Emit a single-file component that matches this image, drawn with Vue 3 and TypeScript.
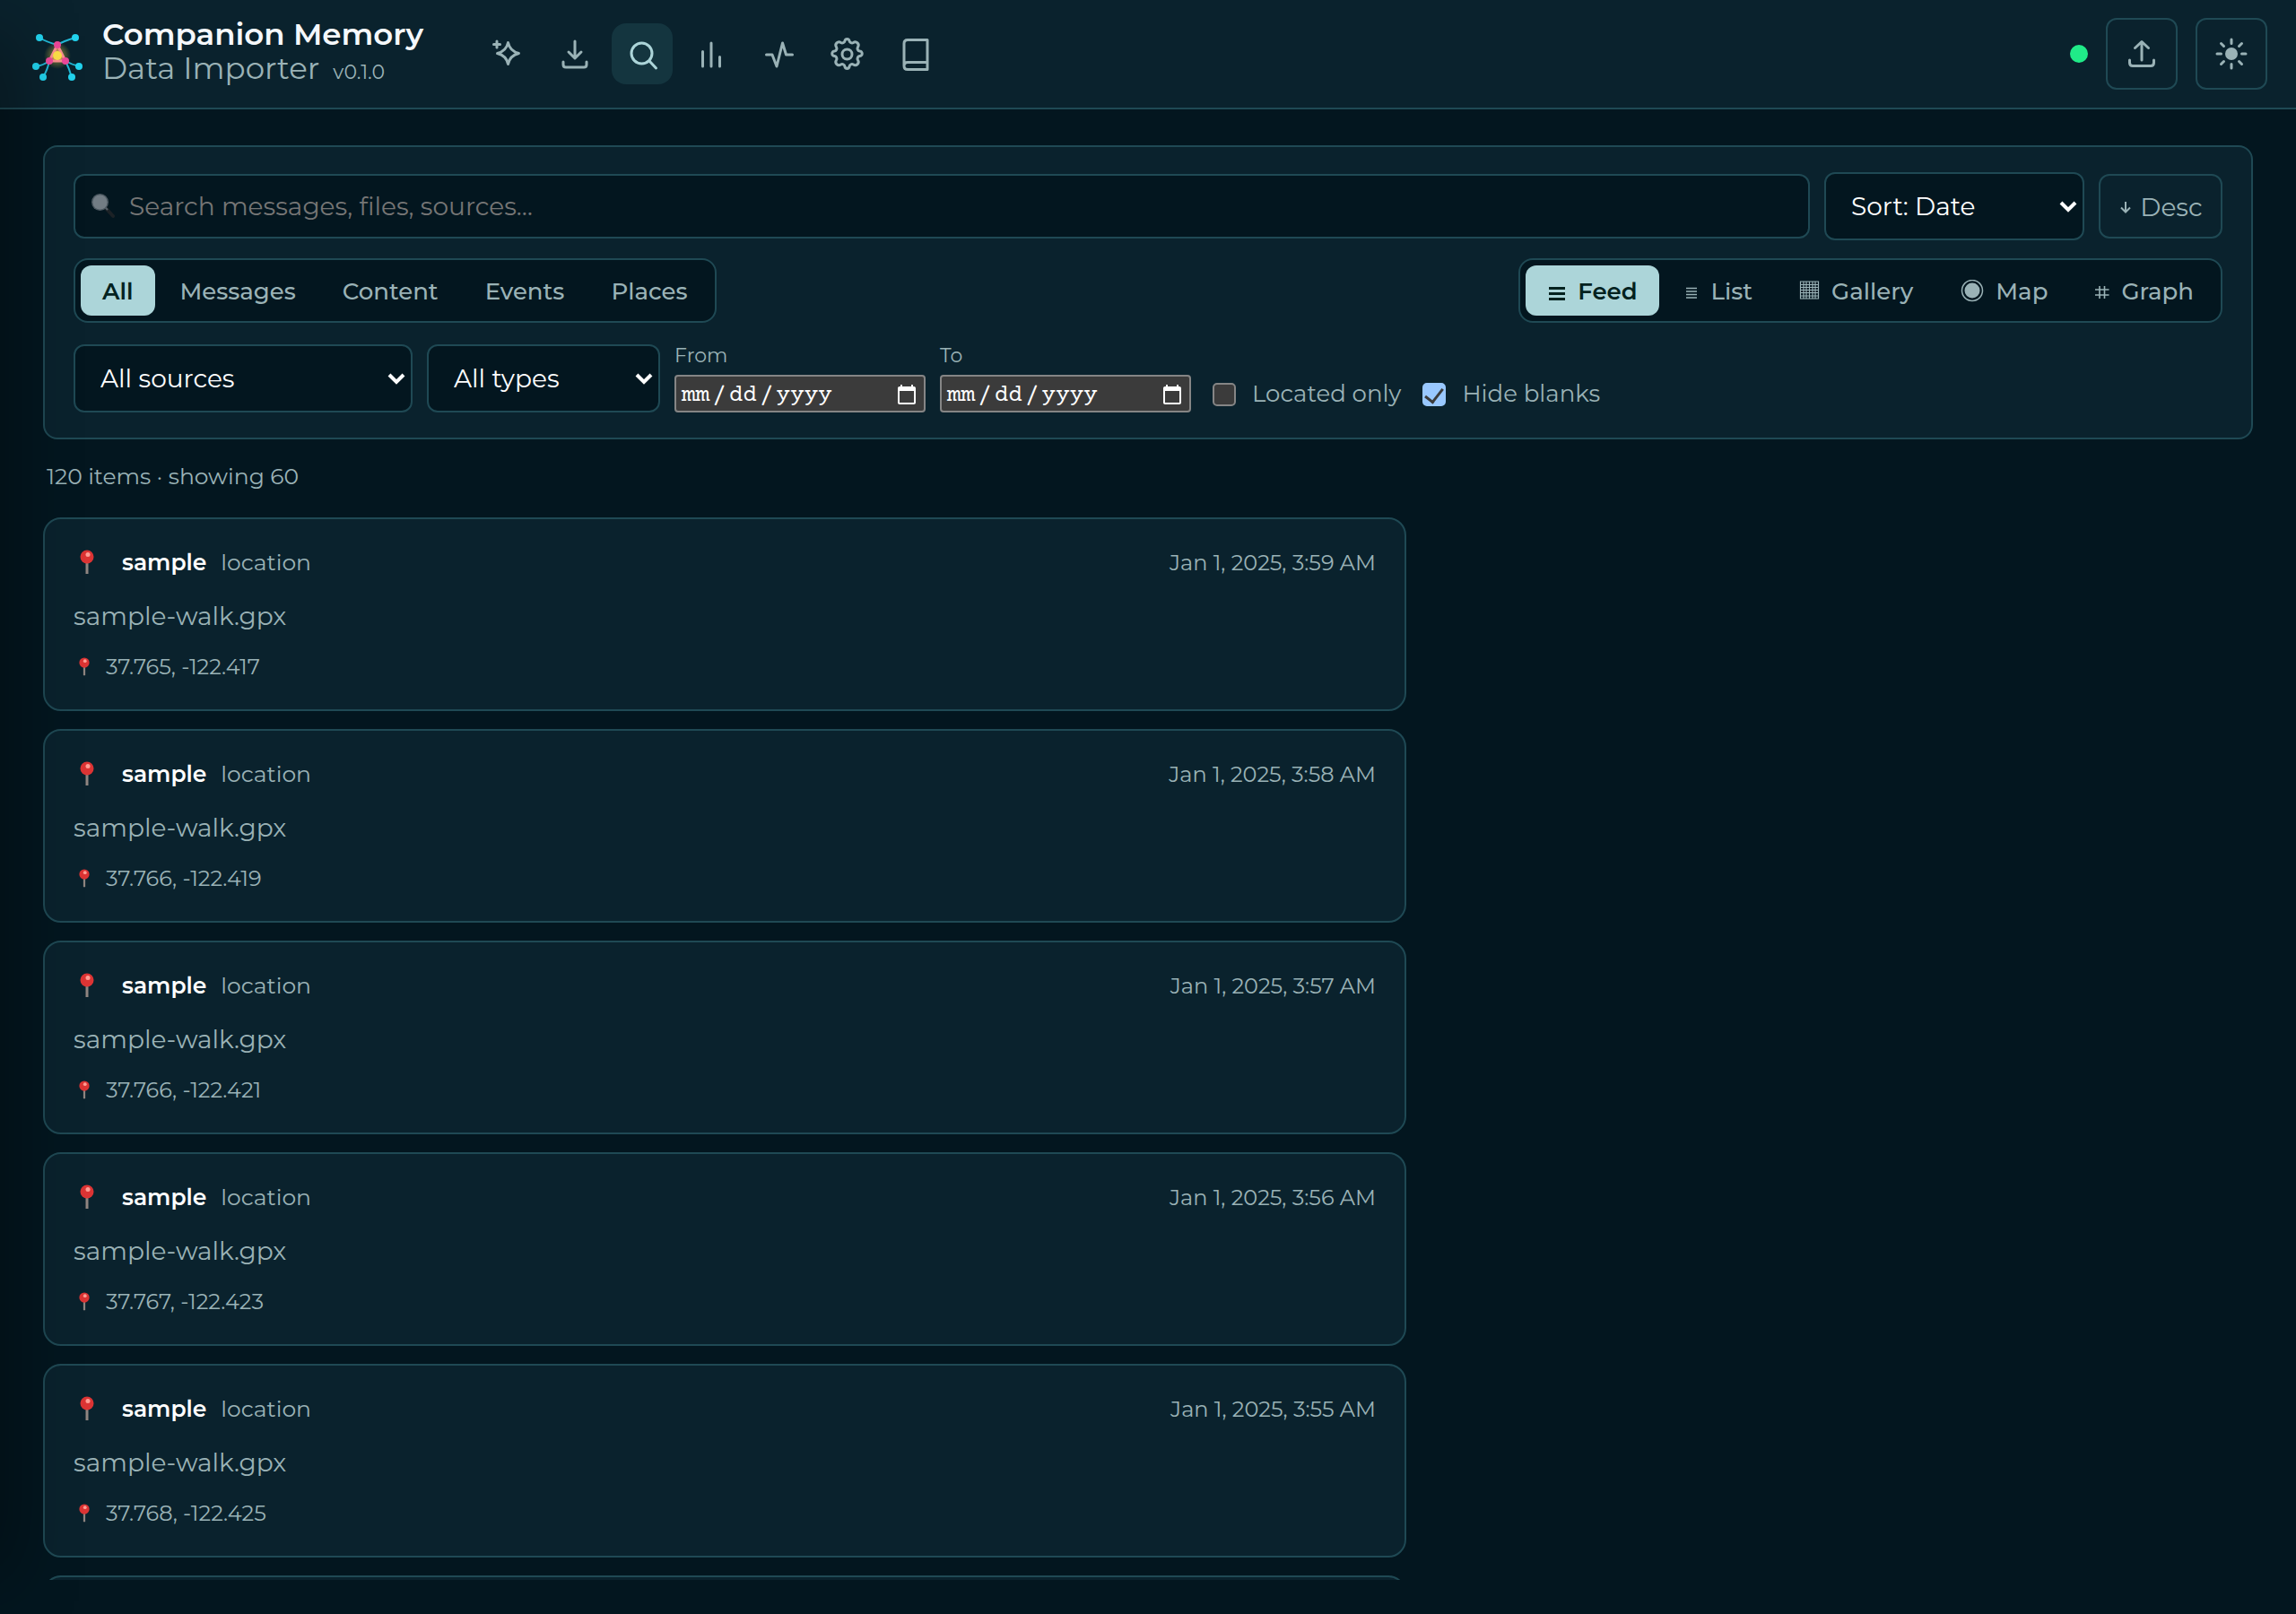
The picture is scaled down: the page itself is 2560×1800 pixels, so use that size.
<script setup lang="ts">
import { ref } from 'vue'

interface Item {
  time: string
  coords: string
}

interface View {
  name: string
  icon: string
}

const navItems = ['Assistant', 'Import', 'Explore', 'Stats', 'Activity', 'Settings', 'Docs']
const activeNav = ref('Explore')

const kinds = ['All', 'Messages', 'Content', 'Events', 'Places']
const activeKind = ref('All')

const views: View[] = [
  { name: 'Feed', icon: 'feed' },
  { name: 'List', icon: 'list' },
  { name: 'Gallery', icon: 'gallery' },
  { name: 'Map', icon: 'map' },
  { name: 'Graph', icon: 'graph' },
]
const activeView = ref('Feed')

const query = ref('')
const locatedOnly = ref(false)
const hideBlanks = ref(true)

const items: Item[] = [
  { time: 'Jan 1, 2025, 3:59 AM', coords: '37.765, -122.417' },
  { time: 'Jan 1, 2025, 3:58 AM', coords: '37.766, -122.419' },
  { time: 'Jan 1, 2025, 3:57 AM', coords: '37.766, -122.421' },
  { time: 'Jan 1, 2025, 3:56 AM', coords: '37.767, -122.423' },
  { time: 'Jan 1, 2025, 3:55 AM', coords: '37.768, -122.425' },
]
</script>

<template>
  <div class="app">
    <header class="topbar">
      <div class="brand">
        <svg class="logo" viewBox="0 0 64 64" aria-hidden="true">
          <defs>
            <radialGradient id="glow">
              <stop offset="0" stop-color="#fde047" stop-opacity="0.6" />
              <stop offset="1" stop-color="#fde047" stop-opacity="0" />
            </radialGradient>
          </defs>
          <g fill="none" stroke="#22b8d6" stroke-width="2">
            <path d="M12 14Q20 19 32 22Q38 18 52 14" />
            <path d="M8 46Q16 45 23 40Q21 50 16 58" />
            <path d="M56 46Q48 44 41 40Q45 48 48 58" />
          </g>
          <circle cx="32" cy="34" r="15" fill="url(#glow)" />
          <path d="M32 22L23 40H41Z" fill="#f9a06a" fill-opacity="0.6" stroke="#fb8f8f" stroke-width="3" />
          <g fill="#22d3ee">
            <circle cx="12" cy="14" r="4" /><circle cx="52" cy="14" r="4" />
            <circle cx="8" cy="46" r="4" /><circle cx="56" cy="46" r="4" />
            <circle cx="16" cy="58" r="4" /><circle cx="48" cy="58" r="4" />
          </g>
          <g fill="#ec4899">
            <circle cx="32" cy="22" r="4" /><circle cx="23" cy="40" r="4" /><circle cx="41" cy="40" r="4" />
          </g>
          <circle cx="32" cy="34" r="5" fill="#fde047" />
        </svg>
        <div class="brand-text">
          <div class="brand-title">Companion Memory</div>
          <div class="brand-sub">Data Importer <span class="version">v0.1.0</span></div>
        </div>
      </div>

      <nav class="nav" aria-label="Main">
        <button
          v-for="item in navItems"
          :key="item"
          type="button"
          class="nav-btn"
          :class="{ active: item === activeNav }"
          :aria-label="item"
          @click="activeNav = item"
        >
          <svg viewBox="0 0 40 40" aria-hidden="true">
            <g v-if="item === 'Assistant'">
              <path d="M22.500 7.500Q24.500 17 34.500 19.500Q24.500 22 22.500 31.500Q20.500 22 10.500 19.500Q20.500 17 22.500 7.500Z" />
              <path d="M10 6V13M6.500 9.500H13.500" />
            </g>
            <g v-else-if="item === 'Import'">
              <path d="M21 6V24M14 18L21 25L28 18M8 29V32Q8 35 11 35H31Q34 35 34 32V29" />
            </g>
            <g v-else-if="item === 'Explore'">
              <circle cx="19.500" cy="19.500" r="11.500" /><path d="M28 28L35.500 36" />
            </g>
            <g v-else-if="item === 'Stats'">
              <path d="M11.500 17.500V34M21 8V34M30.500 23.500V34" />
            </g>
            <g v-else-if="item === 'Activity'">
              <path d="M6.500 21H13L18 34L24.500 8L28.500 21H35.500" />
            </g>
            <g v-else-if="item === 'Settings'">
              <path d="M18 5.500a2.600 2.600 0 0 1 5 0a3 3 0 0 0 4.500 2a3.600 3.600 0 0 1 5 5a3 3 0 0 0 2 4.500a2.600 2.600 0 0 1 0 5.500a3 3 0 0 0 -2 4.500a3.600 3.600 0 0 1 -5 5a3 3 0 0 0 -4.500 2.500a2.600 2.600 0 0 1 -5 0a3 3 0 0 0 -4.500 -2.500a3.600 3.600 0 0 1 -5 -5a3 3 0 0 0 -2 -4.500a2.600 2.600 0 0 1 0 -5.500a3 3 0 0 0 2 -4.500a3.600 3.600 0 0 1 5 -5a3 3 0 0 0 4.500 -2Z" />
              <circle cx="20.500" cy="20.500" r="5.500" />
            </g>
            <g v-else>
              <path d="M8 33V8.500Q8 4.500 12 4.500H34V37.500H12Q8 37.500 8 33.500Q8 29.500 12 29.500H33.500" />
            </g>
          </svg>
        </button>
      </nav>

      <div class="actions">
        <span class="status" role="img" aria-label="Online"></span>
        <button type="button" class="icon-btn" aria-label="Upload">
          <svg viewBox="0 0 40 40" aria-hidden="true">
            <path d="M20 27V7M12.500 13.500L20 6.500L27.500 13.500M6.500 27V30Q6.500 33.500 10 33.500H30Q33.500 33.500 33.500 30V27" />
          </svg>
        </button>
        <button type="button" class="icon-btn" aria-label="Toggle theme">
          <svg viewBox="0 0 40 40" aria-hidden="true">
            <circle cx="20" cy="20" r="7" fill="currentColor" stroke="none" />
            <path d="M20 4V8.500M20 31.500V36M4 20H8.500M31.500 20H36M8.500 8.500L11.500 11.500M28.500 28.500L31.500 31.500M8.500 31.500L11.500 28.500M28.500 11.500L31.500 8.500" />
          </svg>
        </button>
      </div>
    </header>

    <main class="content">
      <section class="filters" aria-label="Filters">
        <div class="row">
          <label class="search">
            <svg class="lens" viewBox="0 0 26 28" aria-hidden="true">
              <path d="M15 15L24 25" stroke="#1c2226" stroke-width="4" stroke-linecap="round" />
              <path d="M14 14L18 18" stroke="#56616a" stroke-width="2" />
              <circle cx="9.500" cy="9.500" r="9.500" fill="#4e5a63" />
              <circle cx="9.500" cy="9.500" r="8" fill="#727c84" />
            </svg>
            <input v-model="query" type="text" placeholder="Search messages, files, sources…" aria-label="Search" />
          </label>
          <div class="select sort">
            <select aria-label="Sort"><option>Sort: Date</option></select>
            <svg viewBox="0 0 20 14" aria-hidden="true"><path d="M2 3L10 11L18 3" /></svg>
          </div>
          <button type="button" class="order">
            <svg viewBox="0 0 12 14" aria-hidden="true"><path d="M6 1V12M1 7.500L6 12.500L11 7.500" /></svg>
            Desc
          </button>
        </div>

        <div class="row tabs-row">
          <div class="segmented">
            <button
              v-for="kind in kinds"
              :key="kind"
              type="button"
              :class="{ active: kind === activeKind }"
              @click="activeKind = kind"
            >{{ kind }}</button>
          </div>
          <div class="segmented">
            <button
              v-for="view in views"
              :key="view.name"
              type="button"
              :class="{ active: view.name === activeView }"
              @click="activeView = view.name"
            >
              <svg v-if="view.icon === 'feed'" viewBox="0 0 22 26" width="22" height="26" aria-hidden="true">
                <path d="M2 9.500H20M2 15.500H20M2 21.500H20" stroke-width="3" />
              </svg>
              <svg v-else-if="view.icon === 'list'" viewBox="0 0 18 26" width="18" height="26" aria-hidden="true">
                <path d="M2 9.500H14M2 13H14M2 16.500H14M2 20H14" stroke-width="1.500" />
              </svg>
              <svg v-else-if="view.icon === 'gallery'" viewBox="0 0 24 26" width="24" height="26" aria-hidden="true">
                <path d="M1.500 2H21.500V21H1.500ZM5 2V21M8 2V21M11.500 2V21M15 2V21M18 2V21M1.500 5.500H21.500M1.500 8.500H21.500M1.500 11.500H21.500M1.500 14.500H21.500M1.500 18H21.500" stroke-width="1.200" />
              </svg>
              <svg v-else-if="view.icon === 'map'" viewBox="0 0 28 26" width="28" height="26" aria-hidden="true">
                <circle cx="14" cy="12" r="11.500" stroke-width="1.500" /><circle cx="14" cy="12" r="8.500" fill="currentColor" stroke="none" />
              </svg>
              <svg v-else viewBox="0 0 18 26" width="18" height="26" aria-hidden="true">
                <path d="M6 7V21M11.500 7V21M1 11H16.500M1 17H16.500" stroke-width="1.600" />
              </svg>
              {{ view.name }}
            </button>
          </div>
        </div>

        <div class="row bottom-row">
          <div class="select sources">
            <select aria-label="Source"><option>All sources</option></select>
            <svg viewBox="0 0 20 14" aria-hidden="true"><path d="M2 3L10 11L18 3" /></svg>
          </div>
          <div class="select types">
            <select aria-label="Type"><option>All types</option></select>
            <svg viewBox="0 0 20 14" aria-hidden="true"><path d="M2 3L10 11L18 3" /></svg>
          </div>
          <label class="date">From<input type="date" /></label>
          <label class="date">To<input type="date" /></label>
          <label class="check"><input v-model="locatedOnly" type="checkbox" />Located only</label>
          <label class="check"><input v-model="hideBlanks" type="checkbox" />Hide blanks</label>
        </div>
      </section>

      <p class="count">120 items · showing 60</p>

      <div class="feed-list">
        <article v-for="item in items" :key="item.time" class="card">
          <div class="card-head">
            <svg class="pin" viewBox="0 0 16 28" aria-hidden="true">
              <path d="M8 14V27" stroke="#8f8580" stroke-width="3" />
              <circle cx="8" cy="8" r="7.500" fill="#dc3434" /><circle cx="9" cy="5.500" r="2.500" fill="#ff9d94" />
            </svg>
            <strong>sample</strong>
            <span class="type">location</span>
            <time>{{ item.time }}</time>
          </div>
          <p class="file">sample-walk.gpx</p>
          <div class="place">
            <svg class="pin small" viewBox="0 0 16 28" aria-hidden="true">
              <path d="M8 14V27" stroke="#8f8580" stroke-width="3" />
              <circle cx="8" cy="8" r="7.500" fill="#dc3434" /><circle cx="9" cy="5.500" r="2.500" fill="#ff9d94" />
            </svg>
            {{ item.coords }}
          </div>
        </article>
        <div class="card" aria-hidden="true"></div>
      </div>
    </main>
    <div class="edge-shade" aria-hidden="true"></div>
  </div>
</template>

<style>
body {
  background: #03161f;
}
</style>

<style scoped>
.app {
  --panel: #0a222d;
  --field: #03161f;
  --line: #1f4954;
  --muted: #9ab2b6;
  --accent: #acd5d9;
  position: relative;
  display: flex;
  flex-direction: column;
  height: 100vh;
  box-sizing: border-box;
  padding-bottom: 38px;
  overflow: hidden;
  background: #03161f;
  color: var(--muted);
  color-scheme: dark;
  font-family: Montserrat, Inter, sans-serif;
  font-size: 28px;
}
* {
  box-sizing: border-box;
}
button,
select,
.search input {
  font-family: inherit;
  font-size: 28px;
}
button {
  color: inherit;
  cursor: pointer;
}
svg {
  flex: none;
}
.topbar {
  flex: none;
  display: flex;
  align-items: center;
  height: 122px;
  padding: 0 32px;
  background: var(--panel);
  border-bottom: 2px solid var(--line);
}
.brand {
  display: flex;
  align-items: center;
  gap: 18px;
  width: 498px;
}
.logo {
  width: 64px;
  height: 64px;
}
.brand-text {
  padding-bottom: 2px;
  font-size: 34px;
  line-height: 38px;
  white-space: nowrap;
}
.brand-title {
  color: #f5f8fb;
  font-weight: 600;
}
.version {
  margin-left: 6px;
  font-size: 22px;
}
.nav {
  display: flex;
  gap: 8px;
}
.nav-btn,
.icon-btn {
  display: flex;
  align-items: center;
  justify-content: center;
  padding: 0;
  border: 0;
  background: none;
}
.nav-btn {
  width: 68px;
  height: 68px;
  border-radius: 16px;
}
.nav-btn.active {
  background: #14353f;
  color: var(--accent);
}
.nav-btn svg,
.icon-btn svg {
  width: 40px;
  height: 40px;
  fill: none;
  stroke: currentColor;
  stroke-width: 3;
  stroke-linecap: round;
  stroke-linejoin: round;
}
.actions {
  display: flex;
  align-items: center;
  gap: 20px;
  margin-left: auto;
}
.status {
  width: 20px;
  height: 20px;
  border-radius: 50%;
  background: #20eb88;
}
.icon-btn {
  width: 80px;
  height: 80px;
  border: 2px solid var(--line);
  border-radius: 12px;
}
.content {
  flex: 1;
  min-height: 0;
  overflow: hidden;
  padding: 40px 48px 0;
}
.filters {
  display: flex;
  flex-direction: column;
  gap: 20px;
  padding: 28px 32px;
  background: var(--panel);
  border: 2px solid var(--line);
  border-radius: 16px;
}
.row {
  display: flex;
  align-items: center;
  gap: 16px;
}
.search {
  flex: 1;
  display: flex;
  align-items: center;
  gap: 16px;
  height: 72px;
  padding: 0 18px;
  background: var(--field);
  border: 2px solid var(--line);
  border-radius: 12px;
}
.lens {
  width: 26px;
  height: 28px;
  fill: none;
}
.search input {
  flex: 1;
  min-width: 0;
  padding: 0;
  border: 0;
  outline: 0;
  background: none;
  color: #f5f8fb;
}
.search input::placeholder {
  color: #757575;
}
.select {
  display: grid;
  align-items: center;
}
.select select,
.select svg {
  grid-area: 1 / 1;
}
.select select {
  appearance: none;
  width: 100%;
  height: 76px;
  padding: 0 40px 0 28px;
  background: var(--field);
  border: 2px solid var(--line);
  border-radius: 12px;
  color: #fff;
}
.select svg {
  justify-self: end;
  width: 20px;
  height: 14px;
  margin-right: 8px;
  fill: none;
  stroke: #fff;
  stroke-width: 4;
  pointer-events: none;
}
.sort {
  width: 290px;
}
.sources {
  width: 378px;
}
.types {
  width: 260px;
}
.order {
  display: flex;
  align-items: center;
  justify-content: center;
  gap: 10px;
  width: 138px;
  height: 72px;
  padding: 2px 0 0 2px;
  background: none;
  border: 2px solid var(--line);
  border-radius: 12px;
}
.order svg {
  width: 12px;
  height: 14px;
  fill: none;
  stroke: currentColor;
  stroke-width: 2;
}
.tabs-row {
  justify-content: space-between;
}
.segmented {
  display: flex;
  gap: 4px;
  height: 72px;
  padding: 6px;
  background: var(--field);
  border: 2px solid var(--line);
  border-radius: 16px;
}
.segmented button {
  display: flex;
  align-items: center;
  gap: 12px;
  padding: 2px 24px 0;
  border: 0;
  border-radius: 12px;
  background: none;
  font-size: 26px;
  font-weight: 500;
}
.segmented button.active {
  background: var(--accent);
  color: #03221f;
  font-weight: 600;
}
.segmented svg {
  fill: none;
  stroke: currentColor;
}
.bottom-row {
  align-items: flex-end;
  margin-top: 4px;
}
.date {
  display: flex;
  flex-direction: column;
  gap: 8px;
  width: 280px;
  font-size: 22px;
  line-height: 26px;
}
.date input {
  width: 100%;
  height: 42px;
  padding: 4px 4px 0 3px;
  border: 2px solid #858585;
  border-radius: 4px;
  background: #3b3b3b;
  color: #fff;
  font-family: "Courier Prime", "Nimbus Mono PS", FreeMono, Courier, "Liberation Mono", monospace;
  font-size: 26px;
}
.date input::-webkit-datetime-edit-month-field,
.date input::-webkit-datetime-edit-day-field,
.date input::-webkit-datetime-edit-year-field {
  padding: 0 3px;
}
.check {
  display: flex;
  align-items: center;
  gap: 18px;
  height: 42px;
  font-size: 26px;
}
.check input {
  appearance: none;
  display: grid;
  place-items: center;
  width: 26px;
  height: 26px;
  margin: 2px 0 0 8px;
  border: 2px solid #858585;
  border-radius: 5px;
  background: #3b3b3b;
}
.check input:checked {
  border-color: #99c8ff;
  background: #99c8ff;
}
.check input:checked::after {
  content: "";
  width: 9px;
  height: 17px;
  margin-bottom: 4px;
  border: solid #3b3b3b;
  border-width: 0 3px 3px 0;
  transform: rotate(38deg);
}
.count {
  margin: 22px 4px 27px;
  font-size: 25px;
  line-height: 38px;
}
.feed-list {
  display: flex;
  flex-direction: column;
  gap: 20px;
  width: 1520px;
}
.card {
  height: 216px;
  padding: 30px 32px;
  background: var(--panel);
  border: 2px solid var(--line);
  border-radius: 20px;
}
.card-head {
  display: flex;
  align-items: center;
  gap: 16px;
  height: 36px;
  font-size: 25px;
}
.card-head strong {
  color: #fff;
  font-weight: 600;
}
.pin {
  width: 16px;
  height: 28px;
  margin: 0 15px 0 7px;
}
.pin.small {
  width: 12px;
  height: 21px;
  margin: 0 0 0 6px;
}
time {
  margin-left: auto;
  font-size: 24px;
}
.file {
  margin: 22px 0 18px;
  font-size: 28px;
  line-height: 40px;
}
.place {
  display: flex;
  align-items: center;
  gap: 18px;
  height: 36px;
  font-size: 24px;
}
.edge-shade {
  position: absolute;
  top: 40px;
  bottom: 40px;
  left: -40px;
  width: 40px;
  box-shadow: 0 0 80px rgba(0, 0, 0, 0.6);
  pointer-events: none;
}
</style>
